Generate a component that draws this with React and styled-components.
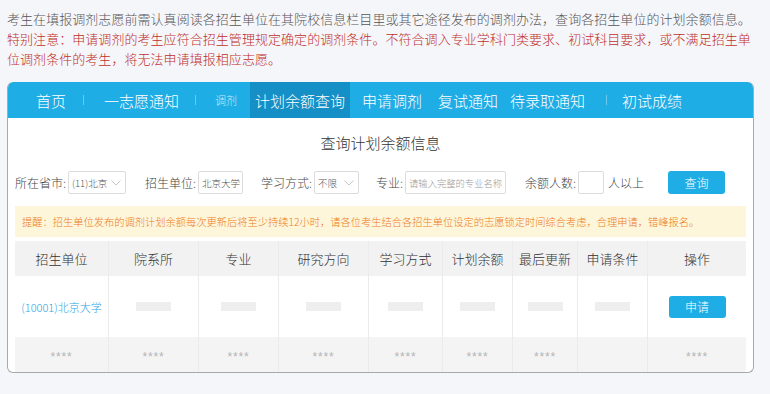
import React from "react";
import styled, { createGlobalStyle } from "styled-components";

const Global = createGlobalStyle`
  html, body { margin: 0; padding: 0; background: #f5f6fa; }
  body { font-family: "Noto Sans CJK SC", "Noto Sans", sans-serif; font-weight: 300; }
  * { box-sizing: border-box; }
`;

const Page = styled.div`
  width: 770px;
  height: 394px;
  padding: 9px 0 0 7px;
  background: #f5f6fa;
  overflow: hidden;
`;

const Intro = styled.div`
  width: 750px;
  font-size: 13px;
  letter-spacing: 0.05px;
  line-height: 20px;
  color: #555;
`;

const Warn = styled.div`
  color: #bf2f2a;
`;

const Panel = styled.div`
  margin-top: 13px;
  width: 747px;
  background: #fff;
  border: 1px solid #a9a9a9;
  border-top: none;
  border-radius: 6px;
  overflow: hidden;
`;

const Nav = styled.nav`
  display: flex;
  align-items: center;
  height: 36px;
  background: #1fade5;
  border-radius: 6px 6px 0 0;
  margin: 0 -1px;
  padding-left: 1px;
`;

const NavItem = styled.div`
  margin-left: ${(p) => p.$ml}px;
  height: 36px;
  display: flex;
  align-items: center;
  padding: 0 ${(p) => (p.$active ? 5 : 0)}px;
  background: ${(p) => (p.$active ? "#1590c7" : "transparent")};
  color: ${(p) => (p.$small ? "rgba(255,255,255,0.75)" : "#fff")};
  font-size: ${(p) => (p.$small ? 11 : 15)}px;
  white-space: nowrap;
`;

const Sep = styled.span`
  margin-left: ${(p) => p.$ml}px;
  width: 1px;
  height: 10px;
  background: rgba(255, 255, 255, 0.35);
`;

const Body = styled.div`
  padding: 0 7px;
`;

const Title = styled.div`
  margin-top: 15px;
  text-align: center;
  font-size: 15px;
  line-height: 20px;
  color: #333;
`;

const FormRow = styled.div`
  display: flex;
  align-items: center;
  height: 23px;
  margin-top: 18px;
`;

const Field = styled.div`
  display: flex;
  align-items: center;
  margin-left: ${(p) => p.$ml || 0}px;
`;

const Label = styled.span`
  font-size: 12px;
  color: #444;
  margin-right: ${(p) => p.$mr ?? 2}px;
  margin-left: ${(p) => p.$mleft ?? 0}px;
  white-space: nowrap;
`;

const Box = styled.div`
  width: ${(p) => p.$w}px;
  height: 23px;
  border: 1px solid #dcdcdc;
  border-radius: 2px;
  display: flex;
  align-items: center;
  justify-content: space-between;
  padding: 0 4px 0 3px;
  font-size: ${(p) => p.$fs || 9.5}px;
  color: ${(p) => (p.$ph ? "#999" : "#555")};
  white-space: nowrap;
  overflow: hidden;
`;

const Chevron = () => (
  <svg width="10" height="6" viewBox="0 0 10 6">
    <path d="M0.5 0.5 L5 5 L9.5 0.5" fill="none" stroke="#c8c8c8" strokeWidth="1" />
  </svg>
);

const Button = styled.button`
  width: 57px;
  height: ${(p) => p.$h || 23}px;
  margin-left: ${(p) => p.$ml || 0}px;
  border: none;
  border-radius: 3px;
  background: #1fade5;
  color: #fff;
  font-family: inherit;
  font-weight: 300;
  font-size: 12px;
  padding: 0;
  cursor: pointer;
`;

const Notice = styled.div`
  margin-top: 12px;
  height: 31px;
  background: #fdf6da;
  color: #ee7b22;
  font-size: 10.25px;
  display: flex;
  align-items: center;
  padding-left: 7px;
  white-space: nowrap;
`;

const Table = styled.div`
  margin-top: 4px;
  display: grid;
  grid-template-columns: 93px 90px 80px 90px 74px 70px 65px 70px 99px;
`;

const Cell = styled.div`
  height: ${(p) => p.$h}px;
  background: ${(p) => p.$bg};
  display: flex;
  align-items: center;
  justify-content: center;
  border-left: ${(p) => (p.$first ? "none" : "1px solid #ebebeb")};
`;

const HeadText = styled.span`
  font-size: 13px;
  color: #333;
`;

const Link = styled.a`
  font-size: 11px;
  color: #2aa5df;
  text-decoration: none;
  white-space: nowrap;
`;

const Bar = styled.span`
  width: 35px;
  height: 9px;
  background: #eeeeee;
`;

const Stars = styled.span`
  font-family: "Liberation Sans", sans-serif;
  font-size: 12px;
  line-height: 12px;
  letter-spacing: 0.8px;
  padding-top: 5px;
  color: #b5b5b5;
`;

const heads = ["招生单位", "院系所", "专业", "研究方向", "学习方式", "计划余额", "最后更新", "申请条件", "操作"];

export default function App() {
  return (
    <Page>
      <Global />
      <Intro>
        考生在填报调剂志愿前需认真阅读各招生单位在其院校信息栏目里或其它途径发布的调剂办法，查询各招生单位的计划余额信息。
        <Warn>
          特别注意：申请调剂的考生应符合招生管理规定确定的调剂条件。不符合调入专业学科门类要求、初试科目要求，或不满足招生单位调剂条件的考生，将无法申请填报相应志愿。
        </Warn>
      </Intro>
      <Panel>
        <Nav>
          <NavItem $ml={28}>首页</NavItem>
          <Sep $ml={17} />
          <NavItem $ml={20}>一志愿通知</NavItem>
          <Sep $ml={16} />
          <NavItem $ml={19} $small>调剂</NavItem>
          <NavItem $ml={13} $active>计划余额查询</NavItem>
          <NavItem $ml={12}>申请调剂</NavItem>
          <NavItem $ml={16}>复试通知</NavItem>
          <NavItem $ml={12}>待录取通知</NavItem>
          <Sep $ml={21} />
          <NavItem $ml={15}>初试成绩</NavItem>
        </Nav>
        <Body>
          <Title>查询计划余额信息</Title>
          <FormRow>
            <Field>
              <Label>所在省市:</Label>
              <Box $w={58}>(11)北京<Chevron /></Box>
            </Field>
            <Field $ml={19}>
              <Label>招生单位:</Label>
              <Box $w={45}>北京大学</Box>
            </Field>
            <Field $ml={18}>
              <Label>学习方式:</Label>
              <Box $w={45}>不限<Chevron /></Box>
            </Field>
            <Field $ml={17}>
              <Label>专业:</Label>
              <Box $w={101} $ph $fs={9.3}>请输入完整的专业名称</Box>
            </Field>
            <Field $ml={19}>
              <Label>余额人数:</Label>
              <Box $w={26} />
              <Label $mr={0} $mleft={4}>人以上</Label>
            </Field>
            <Button $ml={24}>查询</Button>
          </FormRow>
          <Notice>
            提醒：招生单位发布的调剂计划余额每次更新后将至少持续12小时，请各位考生结合各招生单位设定的志愿锁定时间综合考虑，合理申请，错峰报名。
          </Notice>
          <Table>
            {heads.map((h, i) => (
              <Cell key={h} $h={35} $bg="#f2f2f2" $first={i === 0}>
                <HeadText>{h}</HeadText>
              </Cell>
            ))}
            {heads.map((h, i) => (
              <Cell key={"r" + h} $h={61} $bg="#fff" $first={i === 0}>
                {i === 0 ? (
                  <Link href="#">(10001)北京大学</Link>
                ) : i === 8 ? (
                  <Button $h={22}>申请</Button>
                ) : (
                  <Bar />
                )}
              </Cell>
            ))}
            {heads.map((h, i) => (
              <Cell key={"s" + h} $h={35} $bg="#f4f4f4" $first={i === 0}>
                {i !== 7 && <Stars>****</Stars>}
              </Cell>
            ))}
          </Table>
        </Body>
      </Panel>
    </Page>
  );
}
